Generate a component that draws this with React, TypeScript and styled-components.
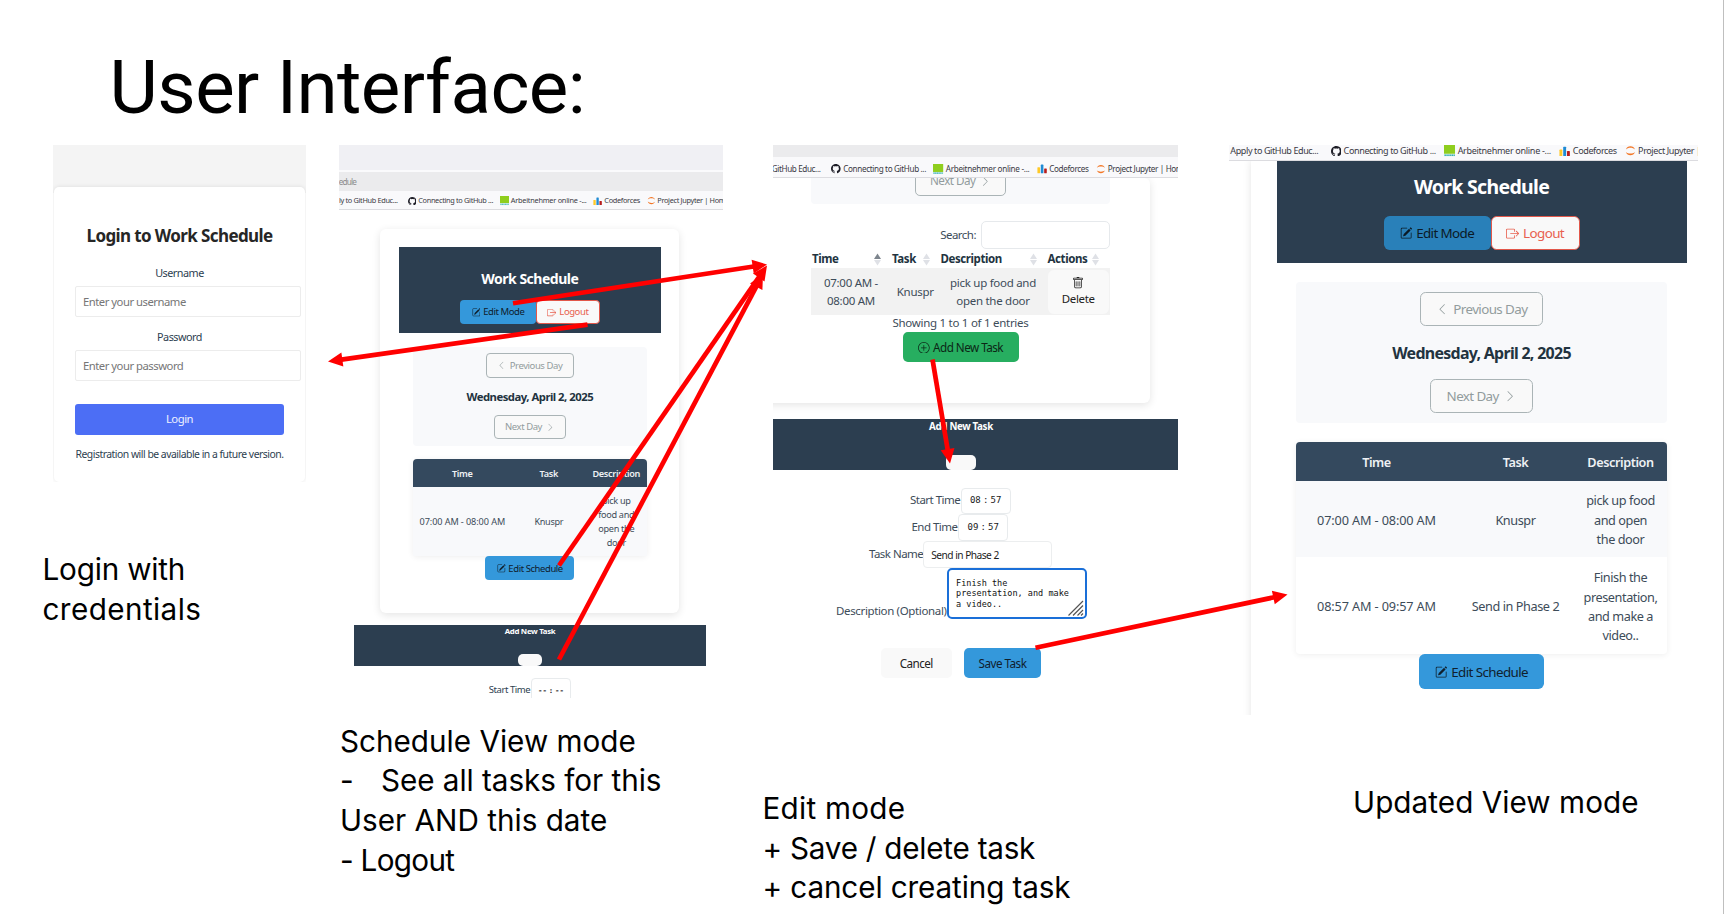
import React from 'react';
import styled, { createGlobalStyle, css } from 'styled-components';
import {
  BsBoxArrowRight,
  BsChevronLeft,
  BsChevronRight,
  BsGithub,
  BsPencilSquare,
  BsPlusCircle,
  BsTrash,
} from 'react-icons/bs';

const ui = `"Noto Sans", "Open Sans", sans-serif`;
const mono = `"DejaVu Sans Mono", "Liberation Mono", monospace`;
const navy = '#2c3e50';

const GlobalStyle = createGlobalStyle`
  *, *::before, *::after { box-sizing: border-box; }
  body { margin: 0; background: #fff; overflow: hidden; }
  svg { display: block; flex: none; }
`;

/* ---------- slide ---------- */

const Slide = styled.main`
  position: relative;
  width: 1724px;
  height: 914px;
  overflow: hidden;
  background: #fff;
  border-right: 1px solid #bfbfbf;
`;

const Title = styled.h1`
  margin: 0;
  padding: 48px 0 0 109.500px;
  height: 145px;
  font: 400 74.5px/80px Roboto, sans-serif;
  letter-spacing: -0.55px;
  color: #000;
`;

const Columns = styled.div`
  display: flex;
  padding-left: 43px;
`;

const Column = styled.section<{ $w: number }>`
  flex: none;
  width: ${(p) => p.$w}px;
`;

const Caption = styled.div<{ $top: number; $left: number }>`
  margin: ${(p) => p.$top}px 0 0 ${(p) => p.$left}px;
  font: 400 29.7px/39.6px Inter, sans-serif;
  color: #000;
  white-space: nowrap;
`;

const Line = styled.div<{ $track?: number }>`
  letter-spacing: ${(p) => p.$track ?? 0}px;
`;

const Dash = styled.span`
  display: inline-block;
  width: 41px;
`;

const Shot = styled.div<{ $w: number; $h: number; $size: number; $left?: number }>`
  display: flex;
  flex-direction: column;
  width: ${(p) => p.$w}px;
  height: ${(p) => p.$h}px;
  margin-left: ${(p) => p.$left ?? 0}px;
  overflow: hidden;
  background: #fff;
  font-family: ${ui};
  font-size: ${(p) => p.$size}px;
  line-height: 1.5;
  letter-spacing: -0.045em;
  color: ${navy};
  white-space: nowrap;
`;

/* ---------- browser chrome ---------- */

const Strip = styled.div<{ $h: number; $bg: string }>`
  flex: none;
  display: flex;
  align-items: center;
  height: ${(p) => p.$h}px;
  background: ${(p) => p.$bg};
  font-size: 8.2px;
  color: #8c8c8c;
`;

const UrlTail = styled.span`
  display: flex;
  justify-content: flex-end;
  width: 17px;
  padding-top: 1px;
  letter-spacing: -0.1em;
`;

const BookmarkBar = styled.div<{ $h: number; $size: number; $pad: string }>`
  flex: none;
  position: relative;
  z-index: 1;
  display: flex;
  align-items: center;
  gap: 0.9em;
  height: ${(p) => p.$h}px;
  padding: ${(p) => p.$pad};
  background: #f9f9fb;
  border-bottom: 1px solid #dcdce0;
  font-size: ${(p) => p.$size}px;
  color: #3a3a44;
`;

const Bookmark = styled.span<{ $track?: number }>`
  flex: none;
  display: flex;
  align-items: center;
  gap: 0.27em;
  letter-spacing: ${(p) => p.$track ?? -0.044}em;
`;

const FirstBookmark = styled(Bookmark)<{ $w: number }>`
  justify-content: flex-end;
  width: ${(p) => p.$w}px;
  margin-right: 0.45em;
`;

const ArbeitIcon = () => (
  <svg width="1.25em" height="1.25em" viewBox="0 0 12 12">
    <rect width="12" height="9.4" fill="#8fce1e" />
    <rect y="9.4" width="12" height="2.6" fill="#d8f0ee" />
    <path d="M.5 10.8h11" stroke="#35aeb0" strokeWidth="1.5" strokeDasharray="1.5 .5" />
  </svg>
);

const CodeforcesIcon = () => (
  <svg width="1.25em" height="1.2em" viewBox="0 0 24 24">
    <rect x="0.5" y="8" width="6.4" height="15" rx="1.4" fill="#ffc928" />
    <rect x="8.8" y="1.5" width="6.4" height="21.5" rx="1.4" fill="#1f8bd4" />
    <rect x="17.1" y="11" width="6.4" height="12" rx="1.4" fill="#b71c1c" />
  </svg>
);

const JupyterIcon = () => (
  <svg width="1.2em" height="1.25em" viewBox="0 0 24 24" fill="#f37726">
    <path d="M2 9.2C3.5 4.600 7.500 2 12 2s8.500 2.600 10 7.200C19.500 6.800 16 5.600 12 5.600S4.500 6.800 2 9.200Z" />
    <path d="M2 14.800C3.500 19.400 7.500 22 12 22s8.500-2.600 10-7.200c-2.500 2.400-6 3.600-10 3.600s-7.500-1.200-10-3.600Z" />
  </svg>
);

type BookmarksProps = {
  h: number;
  size: number;
  firstWidth: number;
  first: string;
  last?: string;
  pad?: string;
};

const Bookmarks = ({
  h,
  size,
  firstWidth,
  first,
  last = 'Project Jupyter | Home',
  pad = '1px 0 0',
}: BookmarksProps) => (
  <BookmarkBar $h={h} $size={size} $pad={pad}>
    <FirstBookmark $w={firstWidth} $track={-0.046}>{first}</FirstBookmark>
    <Bookmark>
      <BsGithub size="1.18em" color="#1d1d26" />
      Connecting to GitHub ...
    </Bookmark>
    <Bookmark $track={-0.034}>
      <ArbeitIcon />
      Arbeitnehmer online -...
    </Bookmark>
    <Bookmark>
      <CodeforcesIcon />
      Codeforces
    </Bookmark>
    <Bookmark $track={-0.045}>
      <JupyterIcon />
      {last}
    </Bookmark>
  </BookmarkBar>
);

/* ---------- shared app parts ---------- */

type Tone = 'blue' | 'blueDark' | 'green' | 'danger' | 'outline' | 'plain';

const tones: Record<Tone, ReturnType<typeof css>> = {
  blue: css`background: #3498db; color: #10202d;`,
  blueDark: css`background: #2980b9; color: #0b1a26;`,
  green: css`background: #27ae60; color: #0c2616;`,
  danger: css`background: #f9f9f9; color: #e8604f; border: 1px solid #e2574a;`,
  outline: css`background: #f9f9f9; color: #929c9d; border: 1px solid #aab4b6;`,
  plain: css`background: #f9f9f9; color: #222;`,
};

const Btn = styled.button<{ $tone: Tone; $w: number; $h?: number; $drop?: number }>`
  display: flex;
  flex: none;
  align-items: center;
  justify-content: center;
  gap: 0.3em;
  width: ${(p) => p.$w}px;
  height: ${(p) => (p.$h ? `${p.$h}px` : '2.56em')};
  padding: ${(p) => p.$drop ?? 0}px 0 0;
  border: 0;
  border-radius: 0.42em;
  font: inherit;
  letter-spacing: inherit;
  ${(p) => tones[p.$tone]}
`;

const DayBtn = styled(Btn)`
  gap: 0.4em;
  svg { width: 0.92em; height: 0.92em; }
`;

const Card = styled.div<{ $w: number; $h: number; $m: string }>`
  flex: none;
  display: flex;
  flex-direction: column;
  align-items: center;
  width: ${(p) => p.$w}px;
  height: ${(p) => p.$h}px;
  margin: ${(p) => p.$m};
  border-radius: 6px;
  background: #fff;
  box-shadow: 0 2px 9px rgba(0, 0, 0, 0.11);
`;

const Header = styled.header<{ $w: number; $h: number; $m: string; $pad: number }>`
  flex: none;
  display: flex;
  flex-direction: column;
  align-items: center;
  width: ${(p) => p.$w}px;
  height: ${(p) => p.$h}px;
  margin: ${(p) => p.$m};
  padding-top: ${(p) => p.$pad}px;
  background: ${navy};
`;

const HeaderTitle = styled.h2<{ $size: number; $h: number }>`
  margin: 0;
  font-size: ${(p) => p.$size}px;
  line-height: ${(p) => p.$h}px;
  font-weight: 700;
  letter-spacing: -0.035em;
  color: #fff;
`;

const ButtonPair = styled.div<{ $top: number }>`
  display: flex;
  margin-top: ${(p) => p.$top}px;
`;

const DayPanel = styled.div<{ $w: number; $h: number; $m: string; $pad: number }>`
  flex: none;
  display: flex;
  flex-direction: column;
  align-items: center;
  justify-content: space-between;
  width: ${(p) => p.$w}px;
  height: ${(p) => p.$h}px;
  margin: ${(p) => p.$m};
  padding: ${(p) => p.$pad}px 0;
  border-radius: 4px;
  background: #f8f9fb;
`;

const DateText = styled.strong<{ $drop: number }>`
  padding-top: ${(p) => p.$drop}px;
  font-size: 1.19em;
  letter-spacing: -0.044em;
  color: #22333f;
`;

const Table = styled.div<{ $w: number; $size: number; $drop: number }>`
  flex: none;
  width: ${(p) => p.$w}px;
  border-radius: 4px;
  box-shadow: 0 1px 6px rgba(0, 0, 0, 0.07);
  font-size: ${(p) => p.$size}px;
  letter-spacing: -0.034em;
  line-height: 1.52;
  > div { padding-top: ${(p) => p.$drop}px; }
`;

const TableRow = styled.div<{ $cols: string; $h: number; $kind?: 'head' | 'odd' }>`
  display: grid;
  grid-template-columns: ${(p) => p.$cols};
  align-items: center;
  justify-items: center;
  height: ${(p) => p.$h}px;
  text-align: center;
  color: #3d4c59;
  ${(p) =>
    p.$kind === 'head' &&
    css`
      border-radius: 4px 4px 0 0;
      background: #34495e;
      color: #eef1f4;
      font-weight: 600;
    `}
  ${(p) => p.$kind === 'odd' && css`background: #f8f9fb;`}
`;

const Time = styled.span`
  letter-spacing: -0.01em;
`;

const ModalBand = styled.div<{
  $w: number;
  $h: number;
  $m: string;
  $size: number;
  $lh: number;
  $right?: number;
}>`
  flex: none;
  display: flex;
  flex-direction: column;
  align-items: center;
  justify-content: space-between;
  width: ${(p) => p.$w}px;
  height: ${(p) => p.$h}px;
  margin: ${(p) => p.$m};
  padding-right: ${(p) => p.$right ?? 0}px;
  background: ${navy};
  color: #fff;
  font-size: ${(p) => p.$size}px;
  line-height: ${(p) => p.$lh}px;
  font-weight: 700;
  letter-spacing: -0.036em;
`;

const CloseStub = styled.span<{ $w: number; $h: number }>`
  width: ${(p) => p.$w}px;
  height: ${(p) => p.$h}px;
  border-radius: 5px;
  background: #f9f9f9;
`;

const Center = styled.div`
  display: flex;
  flex-direction: column;
  align-items: center;
`;

const Body = styled.div`
  flex: 1;
  min-height: 0;
  overflow: hidden;
`;

/* ---------- login ---------- */

const LoginWrap = styled.div`
  padding: 0 1px;
  background: linear-gradient(#f4f4f4 6px, #fff 6px);
`;

const LoginCard = styled.div`
  display: flex;
  flex-direction: column;
  align-items: center;
  height: 295px;
  padding: 38px 21px 0;
  border-radius: 5px;
  background: #fff;
  box-shadow: 0 0 4px rgba(0, 0, 0, 0.1);
`;

const LoginTitle = styled.h2`
  margin: 0 0 18.500px;
  font-size: 17px;
  line-height: 22px;
  letter-spacing: -0.036em;
  color: #262626;
`;

const FieldLabel = styled.label`
  margin-bottom: 6px;
  font-size: 10.8px;
  line-height: 14px;
`;

const LoginInput = styled.div`
  align-self: flex-start;
  flex: none;
  width: 226px;
  height: 31px;
  margin-bottom: 13px;
  padding-left: 7px;
  border: 1px solid #ececec;
  border-radius: 2px;
  font-size: 11.3px;
  line-height: 30px;
  color: #767676;
`;

const LoginButton = styled.button`
  flex: none;
  width: 209px;
  height: 31.500px;
  margin: 10px 0 12px;
  padding: 1px 0 0;
  border: 0;
  border-radius: 3px;
  background: #4c6ef5;
  color: #eef1ff;
  font: inherit;
  font-size: 11.3px;
  letter-spacing: inherit;
`;

const Note = styled.p`
  margin: 0;
  font-size: 10.4px;
  line-height: 14px;
`;

const LoginShot = () => (
  <Shot $w={253} $h={337} $size={11} $left={10}>
    <Strip $h={42} $bg="#f4f4f4" />
    <LoginWrap>
      <LoginCard>
        <LoginTitle>Login to Work Schedule</LoginTitle>
        <FieldLabel>Username</FieldLabel>
        <LoginInput>Enter your username</LoginInput>
        <FieldLabel>Password</FieldLabel>
        <LoginInput>Enter your password</LoginInput>
        <LoginButton>Login</LoginButton>
        <Note>Registration will be available in a future version.</Note>
      </LoginCard>
    </LoginWrap>
  </Shot>
);

/* ---------- schedule view ---------- */

const TimeBox = styled.span<{ $w: number; $h: number; $size: number; $bold?: boolean }>`
  display: flex;
  align-items: center;
  justify-content: center;
  gap: 0.24em;
  width: ${(p) => p.$w}px;
  height: ${(p) => p.$h}px;
  margin-left: 0.500px;
  border: 1px solid #e8ebed;
  border-radius: 4px;
  font-family: ${mono};
  font-size: ${(p) => p.$size}px;
  font-weight: ${(p) => (p.$bold ? 700 : 400)};
  letter-spacing: 0;
  color: #1a1a1a;
`;

const InlineField = styled.label<{ $m?: string; $end?: boolean }>`
  display: flex;
  align-items: ${(p) => (p.$end ? 'flex-end' : 'center')};
  margin: ${(p) => p.$m ?? 0};
`;

const cols2 = '99px 74px 61px';

const ScheduleShot = () => (
  <Shot $w={384} $h={553} $size={9.5}>
    <Strip $h={25} $bg="#f0f0f4" />
    <Strip $h={2} $bg="#fafafc" />
    <Strip $h={19} $bg="#ebebed">
      <UrlTail>edule</UrlTail>
    </Strip>
    <Bookmarks h={19} size={7.35} firstWidth={58.7} first="ly to GitHub Educ..." pad="2px 0 0" />
    <Card $w={299} $h={384} $m="18.500px 0 0 41.300px">
      <Header $w={262} $h={86.5} $m="18px 0 0" $pad={23.5}>
        <HeaderTitle $size={14} $h={18}>Work Schedule</HeaderTitle>
        <ButtonPair $top={12}>
          <Btn $tone="blue" $w={76} $drop={0.5}>
            <BsPencilSquare size="0.92em" />
            Edit Mode
          </Btn>
          <Btn $tone="danger" $w={63.5} $drop={0.5}>
            <BsBoxArrowRight size="0.98em" />
            Logout
          </Btn>
        </ButtonPair>
      </Header>
      <DayPanel $w={234} $h={99} $m="13.500px 0 13.500px" $pad={6.7}>
        <DayBtn $tone="outline" $w={87.5} $drop={1}>
          <BsChevronLeft />
          Previous Day
        </DayBtn>
        <DateText $drop={2}>Wednesday, April 2, 2025</DateText>
        <DayBtn $tone="outline" $w={72.5} $drop={1}>
          Next Day
          <BsChevronRight />
        </DayBtn>
      </DayPanel>
      <Table $w={234} $size={9.15} $drop={1.6}>
        <TableRow $cols={cols2} $h={27.7} $kind="head">
          <span>Time</span>
          <span>Task</span>
          <span>Description</span>
        </TableRow>
        <TableRow $cols={cols2} $h={69.3} $kind="odd">
          <Time>07:00 AM - 08:00 AM</Time>
          <span>Knuspr</span>
          <span>pick up<br />food and<br />open the<br />door</span>
        </TableRow>
      </Table>
      <Btn $tone="blue" $w={89} $drop={1}>
        <BsPencilSquare size="0.92em" />
        Edit Schedule
      </Btn>
    </Card>
    <ModalBand $w={351.5} $h={41} $m="12.500px 0 11.500px 15.300px" $size={7.8} $lh={12}>
      Add New Task
      <CloseStub $w={24} $h={12} />
    </ModalBand>
    <Center>
      <InlineField $m="0 2px 0 0">
        Start Time
        <TimeBox $w={40.5} $h={26} $size={7.4} $bold>
          <span>--</span>
          <span>:</span>
          <span>--</span>
        </TimeBox>
      </InlineField>
    </Center>
  </Shot>
);

/* ---------- edit mode ---------- */

const ClippedDayPanel = styled(DayPanel)`
  justify-content: flex-end;
  border-radius: 0 0 4px 4px;
`;

const EditBlock = styled.div`
  align-self: flex-start;
  display: flex;
  flex-direction: column;
  align-items: center;
  width: 299px;
  margin-left: 51px;
`;

const SearchRow = styled.label`
  align-self: flex-end;
  display: flex;
  align-items: center;
  gap: 5px;
  margin-top: 17px;
  font-size: 11.5px;
  color: #3d4c59;
`;

const SearchBox = styled.span`
  width: 129px;
  height: 28px;
  border: 1px solid #e6e9ec;
  border-radius: 5px;
`;

const EditGrid = styled.div`
  display: grid;
  grid-template-columns: 80px 48.500px 107px 63.500px;
  width: 299px;
  font-size: 11.5px;
`;

const SortHead = styled.strong<{ $pad: number }>`
  display: flex;
  align-items: center;
  justify-content: space-between;
  height: 19px;
  padding: 1px ${(p) => p.$pad}px 0 1px;
  letter-spacing: -0.036em;
  color: #22333f;
`;

const Cell = styled.span`
  display: flex;
  align-items: center;
  justify-content: center;
  height: 46.500px;
  padding-top: 1px;
  background: #f2f2f2;
  text-align: center;
  line-height: 17.300px;
  letter-spacing: -0.024em;
  color: #3d4c59;
`;

const DeleteBtn = styled.button`
  display: flex;
  flex-direction: column;
  align-items: center;
  justify-content: center;
  gap: 2px;
  width: 61.500px;
  height: 44px;
  padding: 0;
  border: 0;
  border-radius: 6px;
  background: #f9f9f9;
  font: inherit;
  line-height: 16px;
  letter-spacing: -0.03em;
  color: #222;
`;

const Entries = styled.div`
  height: 17.500px;
  font-size: 11.5px;
  line-height: 16.500px;
  letter-spacing: -0.024em;
  color: #3d4c59;
`;

const SortIcon = ({ active }: { active?: boolean }) => (
  <svg width="7" height="13" viewBox="0 0 7 13">
    <path d="M3.500 0.500 7 6H0Z" fill={active ? '#7d858d' : '#dfe1e6'} />
    <path d="M3.500 12.500 7 7H0Z" fill="#dfe1e6" />
  </svg>
);

const Form = styled.div`
  display: flex;
  flex-direction: column;
  font-size: 11.5px;
  color: #3d4c59;
`;

const FieldName = styled.span`
  padding-bottom: 1.500px;
`;

const TextBox = styled.span`
  width: 128.500px;
  height: 27.500px;
  padding-left: 7px;
  border: 1px solid #eceeef;
  border-radius: 4px;
  font-size: 10.2px;
  line-height: 26px;
  color: #1c1c1c;
`;

const TextArea = styled.span`
  display: flex;
  justify-content: space-between;
  width: 140px;
  height: 51px;
  padding: 7.500px 1px 1px 7.500px;
  border: 2px solid #1a6fd8;
  border-radius: 5px;
  font: 8.520px/10.700px ${mono};
  letter-spacing: 0;
  color: #111;
`;

const Grip = styled.svg`
  align-self: flex-end;
  margin-left: -16px;
`;

const OptionalLabel = styled.span`
  height: 21px;
  line-height: 26px;
  letter-spacing: -0.031em;
`;

const Actions = styled.div`
  display: flex;
  gap: 12px;
  margin: 29px 0 0 107.500px;
`;

const EditShot = () => (
  <Shot $w={405} $h={553} $size={11.7} $left={9}>
    <Strip $h={12} $bg="#ebebed" />
    <Bookmarks h={20.5} size={8.15} firstWidth={47.5} first="GitHub Educ..." pad="4px 0 0" />
    <Card $w={390} $h={225} $m="0 0 0 -13px">
      <EditBlock>
        <ClippedDayPanel $w={299} $h={26.5} $m="0" $pad={8.5}>
          <DayBtn $tone="outline" $w={90.5} $drop={1}>
            Next Day
            <BsChevronRight />
          </DayBtn>
        </ClippedDayPanel>
        <SearchRow>
          Search:
          <SearchBox />
        </SearchRow>
        <EditGrid>
          <SortHead $pad={10}>Time <SortIcon active /></SortHead>
          <SortHead $pad={10}>Task <SortIcon /></SortHead>
          <SortHead $pad={10}>Description <SortIcon /></SortHead>
          <SortHead $pad={11}>Actions <SortIcon /></SortHead>
          <Cell>07:00 AM -<br />08:00 AM</Cell>
          <Cell>Knuspr</Cell>
          <Cell>pick up food and<br />open the door</Cell>
          <Cell>
            <DeleteBtn>
              <BsTrash size="12px" />
              Delete
            </DeleteBtn>
          </Cell>
        </EditGrid>
        <Entries>Showing 1 to 1 of 1 entries</Entries>
        <Btn $tone="green" $w={116} $drop={1}>
          <BsPlusCircle size="1em" />
          Add New Task
        </Btn>
      </EditBlock>
    </Card>
    <ModalBand $w={405} $h={51.5} $m="16px 0 17.500px" $size={9.8} $lh={16} $right={29}>
      Add New Task
      <CloseStub $w={30} $h={15.5} />
    </ModalBand>
    <Form>
      <InlineField $m="0 0 0 137px">
        <FieldName>Start Time</FieldName>
        <TimeBox $w={50} $h={26.5} $size={9}>
          <span>08</span>
          <span>:</span>
          <span>57</span>
        </TimeBox>
      </InlineField>
      <InlineField $m="0 0 0 138.500px">
        <FieldName>End Time</FieldName>
        <TimeBox $w={50.5} $h={26.5} $size={9}>
          <span>09</span>
          <span>:</span>
          <span>57</span>
        </TimeBox>
      </InlineField>
      <InlineField $m="0 0 0 96px">
        <FieldName>Task Name</FieldName>
        <TextBox>Send in Phase 2</TextBox>
      </InlineField>
      <InlineField $end $m="0 0 0 63px">
        <OptionalLabel>Description (Optional)</OptionalLabel>
        <TextArea>
          <span>Finish the<br />presentation, and make<br />a video..</span>
          <Grip width="16" height="16" viewBox="0 0 16 16" stroke="#555" strokeWidth="1.200">
            <path d="M0.500 15.500 15 1M5 15.500 15 5.500M9.500 15.500 15 10M13 15.500 15 13.500" />
          </Grip>
        </TextArea>
      </InlineField>
    </Form>
    <Actions>
      <Btn $tone="plain" $w={71.5} $drop={1}>Cancel</Btn>
      <Btn $tone="blue" $w={77} $drop={1}>Save Task</Btn>
    </Actions>
  </Shot>
);

/* ---------- updated view ---------- */

const cols4 = '161px 117px 93px';

const UpdatedShot = () => (
  <Shot $w={469} $h={570} $size={13.4}>
    <Bookmarks
      h={16}
      size={9.05}
      firstWidth={89.3}
      first="Apply to GitHub Educ..."
      last="Project Jupyter |"
      pad="0 0 3px"
    />
    <Body>
      <Card $w={461} $h={600} $m="-4px 0 0 22px">
        <Header $w={410} $h={106} $m="0" $pad={15.5}>
          <HeaderTitle $size={19.5} $h={28}>Work Schedule</HeaderTitle>
          <ButtonPair $top={15.5}>
            <Btn $tone="blueDark" $w={107} $drop={0.5}>
              <BsPencilSquare size="0.92em" />
              Edit Mode
            </Btn>
            <Btn $tone="danger" $w={89} $drop={0.5}>
              <BsBoxArrowRight size="0.98em" />
              Logout
            </Btn>
          </ButtonPair>
        </Header>
        <DayPanel $w={371} $h={140.5} $m="19px 0 19.500px" $pad={9.7}>
          <DayBtn $tone="outline" $w={123} $drop={1}>
            <BsChevronLeft />
            Previous Day
          </DayBtn>
          <DateText $drop={4}>Wednesday, April 2, 2025</DateText>
          <DayBtn $tone="outline" $w={102.5} $drop={1}>
            Next Day
            <BsChevronRight />
          </DayBtn>
        </DayPanel>
        <Table $w={371} $size={12.7} $drop={3}>
          <TableRow $cols={cols4} $h={38.5} $kind="head">
            <span>Time</span>
            <span>Task</span>
            <span>Description</span>
          </TableRow>
          <TableRow $cols={cols4} $h={76.5} $kind="odd">
            <Time>07:00 AM - 08:00 AM</Time>
            <span>Knuspr</span>
            <span>pick up food<br />and open<br />the door</span>
          </TableRow>
          <TableRow $cols={cols4} $h={97}>
            <Time>08:57 AM - 09:57 AM</Time>
            <span>Send in Phase 2</span>
            <span>Finish the<br />presentation,<br />and make a<br />video..</span>
          </TableRow>
        </Table>
        <Btn $tone="blue" $w={125} $h={35} $drop={1}>
          <BsPencilSquare size="0.92em" />
          Edit Schedule
        </Btn>
      </Card>
    </Body>
  </Shot>
);

/* ---------- connectors ---------- */

const ArrowLayer = styled.svg`
  position: absolute;
  inset: 0;
  pointer-events: none;
`;

const arrows = [
  [513, 303.3, 767, 264.5],
  [587.5, 324.7, 328, 361.5],
  [559, 565.5, 767, 265.5],
  [559, 659.5, 763, 274],
  [932.5, 359.5, 950, 463.5],
  [1035.5, 647.7, 1287.5, 594.5],
];

const Arrow = ({ points: [x1, y1, x2, y2] }: { points: number[] }) => {
  const length = Math.hypot(x2 - x1, y2 - y1);
  const ux = (x2 - x1) / length;
  const uy = (y2 - y1) / length;
  const bx = x2 - ux * 14.5;
  const by = y2 - uy * 14.5;
  return (
    <>
      <line x1={x1} y1={y1} x2={bx + ux} y2={by + uy} stroke="#f00" strokeWidth="4.700" />
      <polygon
        fill="#f00"
        points={`${x2},${y2} ${bx - uy * 7},${by + ux * 7} ${bx + uy * 7},${by - ux * 7}`}
      />
    </>
  );
};

export default function App() {
  return (
    <>
      <GlobalStyle />
      <Slide>
        <Title>User Interface:</Title>
        <Columns>
          <Column $w={296}>
            <LoginShot />
            <Caption $top={68} $left={-0.5}>
              <Line $track={-0.2}>Login with</Line>
              <Line $track={0.4}>credentials</Line>
            </Caption>
          </Column>
          <Column $w={425}>
            <ScheduleShot />
            <Caption $top={23.8} $left={1}>
              <Line $track={0}>Schedule View mode</Line>
              <Line $track={-0.05}><Dash>-</Dash>See all tasks for this</Line>
              <Line $track={0}>User AND this date</Line>
              <Line $track={-0.7}>- Logout</Line>
            </Caption>
          </Column>
          <Column $w={465}>
            <EditShot />
            <Caption $top={91.2} $left={-1.5}>
              <Line $track={0.25}>Edit mode</Line>
              <Line $track={-0.25}>+ Save / delete task</Line>
              <Line $track={-0.12}>+ cancel creating task</Line>
            </Caption>
          </Column>
          <Column $w={470}>
            <UpdatedShot />
            <Caption $top={68.2} $left={124}>
              <Line $track={0.05}>Updated View mode</Line>
            </Caption>
          </Column>
        </Columns>
        <ArrowLayer width="1723" height="914">
          {arrows.map((points, i) => (
            <Arrow key={i} points={points} />
          ))}
        </ArrowLayer>
      </Slide>
    </>
  );
}
